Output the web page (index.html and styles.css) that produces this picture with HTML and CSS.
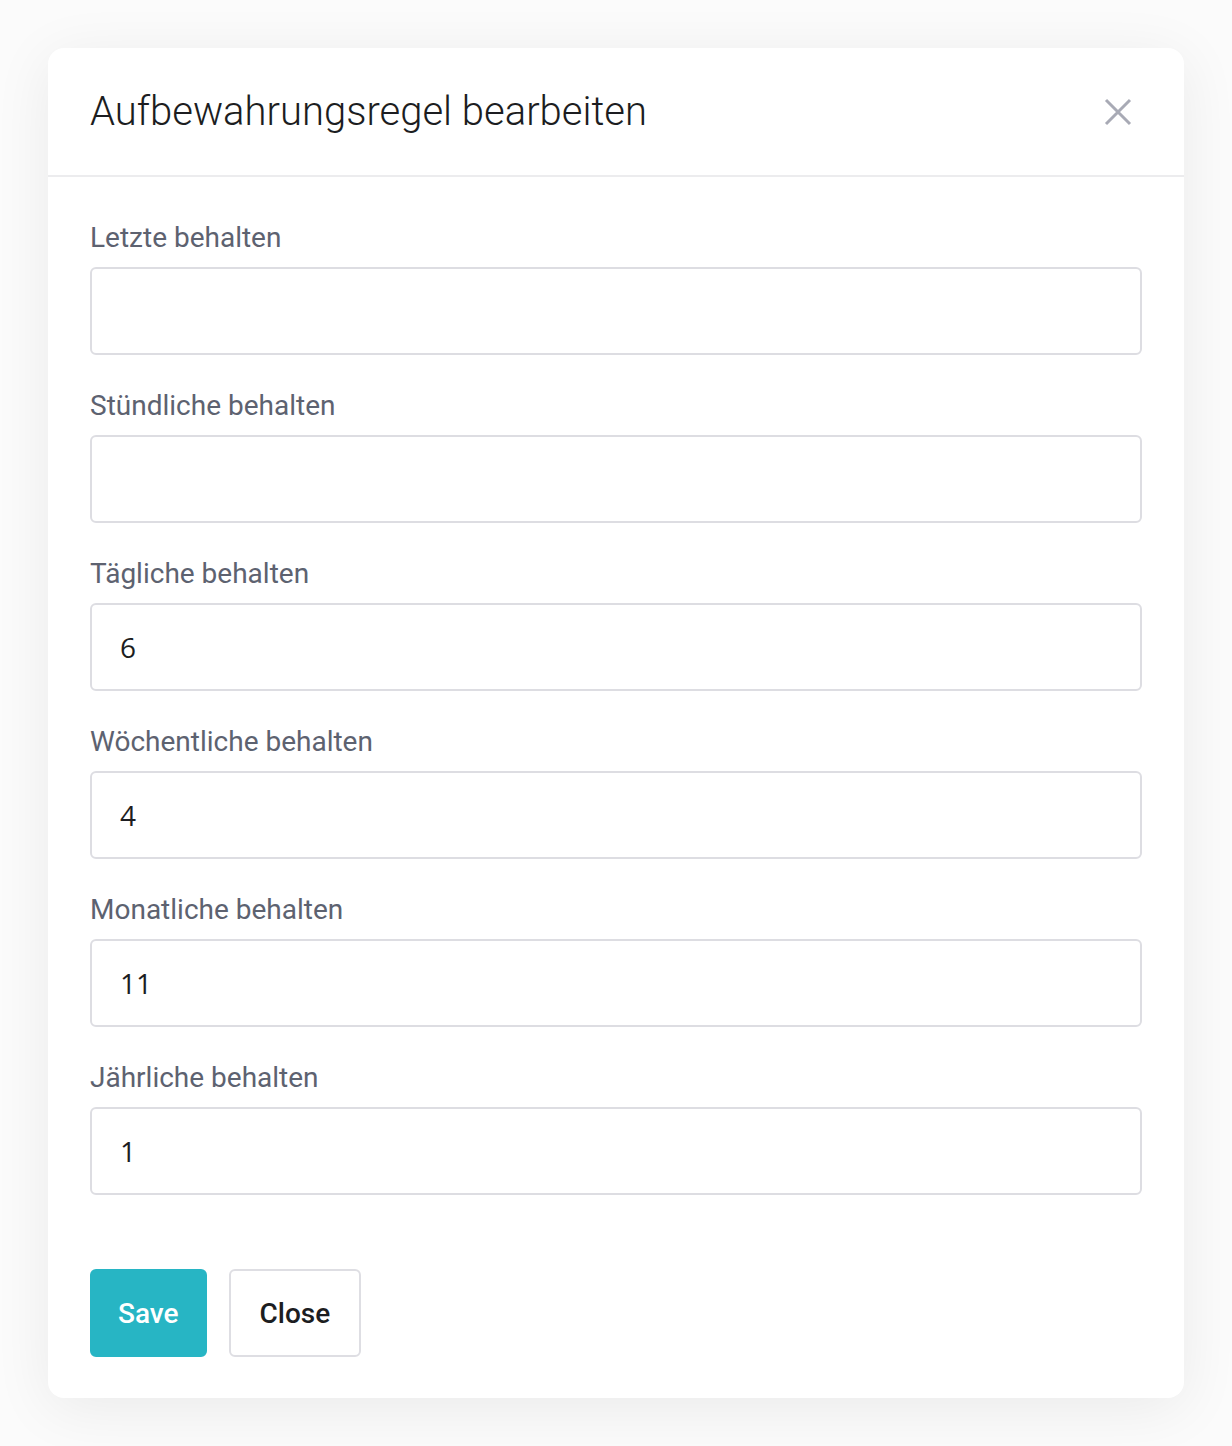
FILE: index.html
```html
<!DOCTYPE html>
<html lang="de">
<head>
<meta charset="utf-8">
<title>Aufbewahrungsregel bearbeiten</title>
<link rel="stylesheet" href="styles.css">
</head>
<body>
<div class="page">
  <div class="modal">
    <div class="modal-header">
      <h1 class="modal-title">Aufbewahrungsregel bearbeiten</h1>
      <button class="close-x" aria-label="Schließen">
        <svg width="30" height="30" viewBox="0 0 30 30"><path d="M3 3 L27 27 M27 3 L3 27" stroke="#a8aab5" stroke-width="3" fill="none"/></svg>
      </button>
    </div>
    <form class="modal-body">
      <div class="field">
        <label class="label">Letzte behalten</label>
        <input class="input" type="text" value="">
      </div>
      <div class="field">
        <label class="label">Stündliche behalten</label>
        <input class="input" type="text" value="">
      </div>
      <div class="field">
        <label class="label">Tägliche behalten</label>
        <input class="input" type="text" value="6">
      </div>
      <div class="field">
        <label class="label">Wöchentliche behalten</label>
        <input class="input" type="text" value="4">
      </div>
      <div class="field">
        <label class="label">Monatliche behalten</label>
        <input class="input" type="text" value="11">
      </div>
      <div class="field">
        <label class="label">Jährliche behalten</label>
        <input class="input" type="text" value="1">
      </div>
      <div class="actions">
        <button type="button" class="btn btn-primary">Save</button>
        <button type="button" class="btn btn-default">Close</button>
      </div>
    </form>
  </div>
</div>
</body>
</html>
```
FILE: styles.css
```css
* { box-sizing: border-box; }
html, body { margin: 0; padding: 0; background: #ffffff; }
body { font-family: Roboto, "Liberation Sans", sans-serif; }
.page {
  padding: 48px;
  min-height: 1446px;
  background: #fbfbfb;
}
.modal {
  background: #fff;
  border-radius: 16px;
  box-shadow: 0 10px 60px rgba(0,0,0,0.07);
  width: 1136px;
}
.modal-header {
  height: 129px;
  border-bottom: 2px solid #ececee;
  display: flex;
  align-items: center;
  justify-content: space-between;
  padding: 0 51px 0 42px;
}
.modal-title {
  margin: 0;
  font-weight: 300;
  font-size: 40px;
  color: #1c1d21;
}
.close-x {
  border: 0;
  background: none;
  padding: 0;
  width: 30px;
  height: 30px;
  display: flex;
}
.modal-body {
  padding: 44px 42px 41px 42px;
  display: flex;
  flex-direction: column;
}
.field {
  display: flex;
  flex-direction: column;
  margin-bottom: 34px;
}
.label {
  font-size: 28px;
  line-height: 34px;
  color: #5d6270;
  margin-bottom: 12px;
}
.input {
  height: 88px;
  border: 2px solid #dddde2;
  border-radius: 6px;
  padding: 0 28px;
  font-family: "Open Sans", "Noto Sans", sans-serif;
  font-size: 28px;
  color: #1c1d21;
  background: #fff;
  outline: none;
}
.actions {
  display: flex;
  gap: 22px;
  margin-top: 40px;
}
.btn {
  height: 88px;
  border-radius: 6px;
  font-family: Roboto, "Liberation Sans", sans-serif;
  font-weight: 500;
  font-size: 28px;
  padding: 0 26px;
}
.btn-primary {
  background: #27b5c4;
  border: 2px solid #27b5c4;
  color: #fff;
}
.btn-default {
  background: #fff;
  border: 2px solid #dedee3;
  color: #1c1d21;
  padding: 0 29px;
}
```
